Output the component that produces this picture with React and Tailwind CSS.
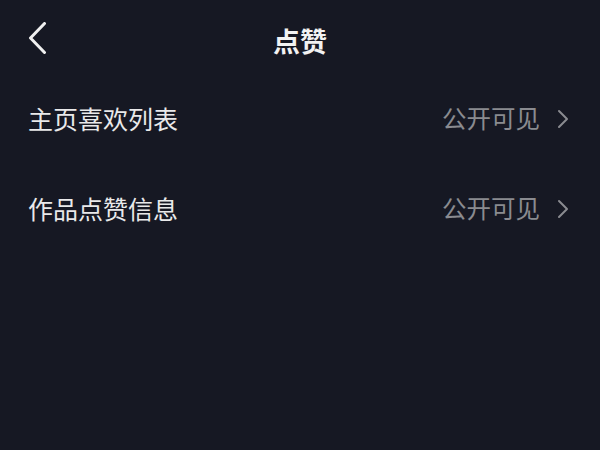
import React from "react";

function Chevron({ className, dir = "right" }) {
  return dir === "left" ? (
    <svg width="20" height="32" viewBox="0 0 20 32" className={className} fill="none">
      <path d="M16.5 1.5 L2.5 16 L16.5 30.5" stroke="currentColor" strokeWidth="3" strokeLinecap="round" strokeLinejoin="round" />
    </svg>
  ) : (
    <svg width="12" height="20" viewBox="0 0 12 20" className={className} fill="none">
      <path d="M2 2 L10 10 L2 18" stroke="currentColor" strokeWidth="2" strokeLinecap="round" strokeLinejoin="round" />
    </svg>
  );
}

function Row({ label, value }) {
  return (
    <div className="flex h-[90px] items-center justify-between pl-[28px] pr-[31px]">
      <span className="text-[25px] leading-none text-[#e9e9ea]">{label}</span>
      <div className="flex items-center gap-[17px] text-[#8a8b90]">
        <span className="text-[24.5px] leading-none">{value}</span>
        <Chevron className="mt-[1px]" />
      </div>
    </div>
  );
}

export default function App() {
  return (
    <div
      className="h-[450px] w-[600px] overflow-hidden bg-[#161823]"
      style={{ fontFamily: '"Noto Sans CJK SC", "Noto Sans", sans-serif' }}
    >
      <div className="relative flex h-[73px] items-center justify-center pt-[8px]">
        <div className="absolute left-[28px] top-[22px] text-[#f0f0f0]">
          <Chevron dir="left" />
        </div>
        <span className="text-[27px] font-bold leading-none text-[#f2f2f2]">点赞</span>
      </div>
      <Row label="主页喜欢列表" value="公开可见" />
      <Row label="作品点赞信息" value="公开可见" />
    </div>
  );
}
